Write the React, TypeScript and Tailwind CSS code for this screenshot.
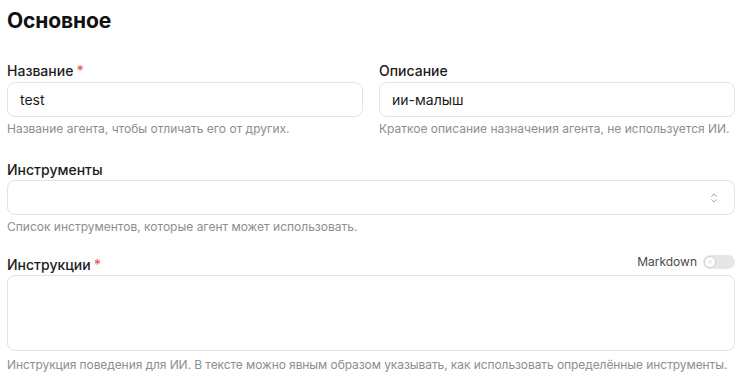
import React from "react";

function Req() {
  return <span className="ml-[3px] text-[#f05a55]">*</span>;
}

export default function App() {
  return (
    <div
      className="w-[748px] h-[384px] bg-white pl-[7px] pt-[7px] text-[#1c1c1c]"
      style={{ fontFamily: "Inter, 'Noto Sans', sans-serif" }}
    >
      <div className="w-[728px] flex flex-col">
        <h1 className="text-[21px] leading-7 font-bold text-[#111] tracking-[-0.1px]">Основное</h1>

        <div className="mt-[26px] grid grid-cols-2 gap-4">
          <div className="flex flex-col">
            <label className="text-[14px] leading-5 font-medium">
              Название<Req />
            </label>
            <div className="mt-px h-[35px] rounded-lg border border-[#e3e3e3] px-3 flex items-center text-[14px] text-[#1c1c1c]">
              test
            </div>
            <p className="mt-1 text-[12px] leading-4 text-[#8e8e8e]">
              Название агента, чтобы отличать его от других.
            </p>
          </div>
          <div className="flex flex-col">
            <label className="text-[14px] leading-5 font-medium">Описание</label>
            <div className="mt-px h-[35px] rounded-lg border border-[#e3e3e3] px-3 flex items-center text-[14px] text-[#1c1c1c]">
              ии-малыш
            </div>
            <p className="mt-1 text-[12px] leading-4 text-[#8e8e8e]">
              Краткое описание назначения агента, не используется ИИ.
            </p>
          </div>
        </div>

        <div className="mt-[23px] flex flex-col">
          <label className="text-[14px] leading-5 font-medium">Инструменты</label>
          <div className="h-[35px] rounded-lg border border-[#e3e3e3] pl-3 pr-[13px] flex items-center justify-end">
            <svg
              width="14"
              height="14"
              viewBox="0 0 24 24"
              fill="none"
              stroke="#9b9b9b"
              strokeWidth="1.6"
              strokeLinecap="round"
              strokeLinejoin="round"
            >
              <path d="m8 15 4 4 4-4" />
              <path d="m8 9 4-4 4 4" />
            </svg>
          </div>
          <p className="mt-1 text-[12px] leading-4 text-[#8e8e8e]">
            Список инструментов, которые агент может использовать.
          </p>
        </div>

        <div className="mt-[20px] flex flex-col">
          <div className="flex justify-between items-start">
            <label className="text-[14px] leading-5 font-medium">
              Инструкции<Req />
            </label>
            <div className="flex items-center gap-[6px]">
              <span className="text-[12px] leading-[14px] text-[#4a4a4a]">Markdown</span>
              <div className="w-8 h-[14px] rounded-full bg-[#e6e6e6] flex items-center pl-px">
                <div className="w-3 h-3 rounded-full bg-white border border-[#d0d0d0] flex items-center justify-center">
                  <div className="w-[4px] h-[4px] rounded-full bg-[#ededed]" />
                </div>
              </div>
            </div>
          </div>
          <div className="h-[76px] rounded-lg border border-[#e3e3e3]" />
          <p className="mt-[6px] text-[12px] leading-4 text-[#8e8e8e] whitespace-nowrap tracking-[-0.08px]">
            Инструкция поведения для ИИ. В тексте можно явным образом указывать, как использовать определённые инструменты.
          </p>
        </div>
      </div>
    </div>
  );
}
